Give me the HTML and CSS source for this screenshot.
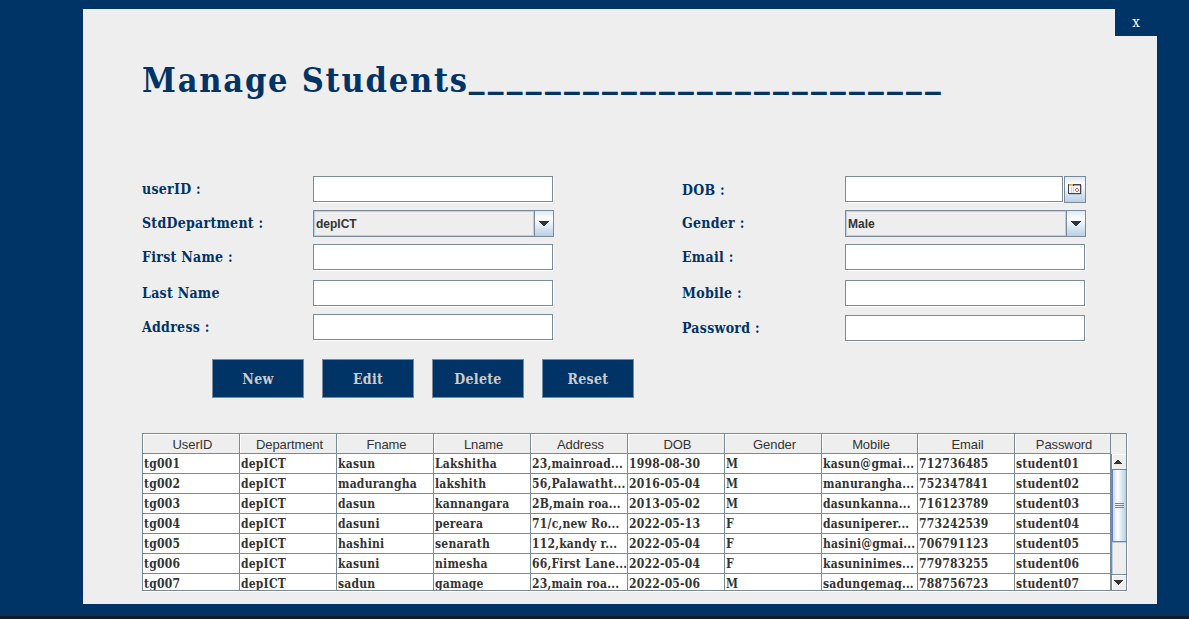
FILE: index.html
```html
<!DOCTYPE html>
<html lang="en">
<head>
<meta charset="utf-8">
<title>Manage Students</title>
<link rel="stylesheet" href="styles.css">
</head>
<body>
<main class="panel">
  <button class="close">x</button>
  <h1 class="title">Manage Students<span class="rule">_________________________</span></h1>
  <form class="form">
    <div class="col col-left">
      <label>userID :</label><input class="field">
      <label>StdDepartment :</label>
      <div class="combo"><span class="value">depICT</span><span class="drop"><svg width="10" height="5" viewBox="0 0 10 5"><path d="M0 0h10v1H9v1H8v1H7v1H6v1H4V4H3V3H2V2H1V1H0z"/></svg></span></div>
      <label>First Name :</label><input class="field">
      <label>Last Name</label><input class="field">
      <label>Address :</label><input class="field">
    </div>
    <div class="col col-right">
      <label class="low">DOB :</label>
      <div class="date"><input class="field"><button type="button" class="cal"><svg width="14" height="11" viewBox="0 0 14 11" shape-rendering="crispEdges"><path fill="#b9c2cc" d="M1 1h13v10H1z"/><path fill="#444" d="M0 0h13v10H0z"/><path fill="#f4f4f4" d="M1 2h11v7H1z"/><path fill="#e8a840" d="M1 0h4v1H1z"/><path fill="#f0c060" d="M1 1h4v1H1z"/><path fill="#8aaee6" d="M6 1h6v1H6z"/><path fill="#d5d5d5" d="M3 3h1v6H3zM5 3h1v6H5z"/><path fill="#e86070" d="M8 4h2v1H8zM7 5h1v2H7zM10 5h1v2h-1zM8 7h2v1H8z"/></svg></button></div>
      <label>Gender :</label>
      <div class="combo"><span class="value">Male</span><span class="drop"><svg width="10" height="5" viewBox="0 0 10 5"><path d="M0 0h10v1H9v1H8v1H7v1H6v1H4V4H3V3H2V2H1V1H0z"/></svg></span></div>
      <label>Email :</label><input class="field">
      <label>Mobile :</label><input class="field">
      <label>Password :</label><input class="field">
    </div>
  </form>
  <div class="actions"><button>New</button><button>Edit</button><button>Delete</button><button>Reset</button></div>
  <section class="grid">
    <div class="row head"><span>UserID</span><span>Department</span><span>Fname</span><span>Lname</span><span>Address</span><span>DOB</span><span>Gender</span><span>Mobile</span><span>Email</span><span>Password</span></div>
    <div class="body">
      <div class="rows">
        <div class="row"><span>tg001</span><span>depICT</span><span>kasun</span><span>Lakshitha</span><span>23,mainroad...</span><span>1998-08-30</span><span>M</span><span>kasun@gmai...</span><span>712736485</span><span>student01</span></div>
        <div class="row"><span>tg002</span><span>depICT</span><span>madurangha</span><span>lakshith</span><span>56,Palawatht...</span><span>2016-05-04</span><span>M</span><span>manurangha...</span><span>752347841</span><span>student02</span></div>
        <div class="row"><span>tg003</span><span>depICT</span><span>dasun</span><span>kannangara</span><span>2B,main roa...</span><span>2013-05-02</span><span>M</span><span>dasunkanna...</span><span>716123789</span><span>student03</span></div>
        <div class="row"><span>tg004</span><span>depICT</span><span>dasuni</span><span>pereara</span><span>71/c,new Ro...</span><span>2022-05-13</span><span>F</span><span>dasuniperer...</span><span>773242539</span><span>student04</span></div>
        <div class="row"><span>tg005</span><span>depICT</span><span>hashini</span><span>senarath</span><span>112,kandy r...</span><span>2022-05-04</span><span>F</span><span>hasini@gmai...</span><span>706791123</span><span>student05</span></div>
        <div class="row"><span>tg006</span><span>depICT</span><span>kasuni</span><span>nimesha</span><span>66,First Lane...</span><span>2022-05-04</span><span>F</span><span>kasuninimes...</span><span>779783255</span><span>student06</span></div>
        <div class="row"><span>tg007</span><span>depICT</span><span>sadun</span><span>gamage</span><span>23,main roa...</span><span>2022-05-06</span><span>M</span><span>sadungemag...</span><span>788756723</span><span>student07</span></div>
      </div>
      <div class="scroll">
        <div class="arrow"><svg width="8" height="4" viewBox="0 0 8 4"><path d="M3 0h2v1h1v1h1v1h1v1H0V3h1V2h1V1h1z"/></svg></div>
        <div class="thumb"><i></i><i></i><i></i></div>
        <div class="track"></div>
        <div class="arrow down"><svg width="9" height="5" viewBox="0 0 9 5"><path d="M0 0h9v1H8v1H7v1H6v1H5v1H4V4H3V3H2V2H1V1H0z"/></svg></div>
      </div>
    </div>
  </section>
</main>
<footer class="taskbar"></footer>
</body>
</html>
```

FILE: styles.css
```css
* { box-sizing: border-box; }
body {
  margin: 0; height: 619px; overflow: hidden; background: #003366;
  display: flex; flex-direction: column; padding: 9px 32px 0 83px;
  font-family: "DejaVu Serif Condensed", "DejaVu Serif", serif; font-stretch: condensed;
}
button, input { font: inherit; margin: 0; padding: 0; border-radius: 0; outline: 0; }
.panel { width: 1074px; height: 595px; flex: none; background: #eee; display: flex; flex-direction: column; padding-left: 59px; }
.close { align-self: flex-end; width: 42px; height: 27px; border: 0; background: #003366; color: #fff; font-size: 15px; padding-bottom: 2px; }
.title { margin: 20px 0 0; height: 48px; line-height: 48px; font-size: 34px; font-weight: bold; color: #003366; white-space: nowrap; letter-spacing: 1.78px; }
.rule { letter-spacing: 3.27px; font-size: 35px; vertical-align: 5px; line-height: 1; }
.form { display: flex; margin-top: 72px; height: 183px; color: #003366; font-size: 14px; font-weight: bold; }
.col { display: grid; align-content: start; }
.col-left { grid-template: 34px 34px 36px 34px 26px / 171px 241px; margin-right: 128px; }
.col-right { grid-template: 34px 34px 36px 35px 26px / 163px 241px; }
.col label { line-height: 26px; white-space: nowrap; letter-spacing: 0.27px; }
.col .low { line-height: 28px; }
.field { width: 240px; height: 26px; background: #fff; border: 1px solid #7a8a99; box-shadow: 1px 1px #fff; }
.combo { display: flex; width: 241px; height: 27px; border: 1px solid #7a8a99; color: #333; font: bold 12px "Liberation Sans", sans-serif; }
.value { flex: 1; line-height: 24px; padding-left: 1px; border: 1px solid #b8cfe5; background: #eee; }
.drop { width: 19px; border-left: 1px solid #7a8a99; background: linear-gradient(#dde8f3, #fff 30%, #b8cfe5); display: flex; align-items: center; justify-content: center; }
svg { display: block; fill: #333; }
.date { display: flex; gap: 1px; }
.date .field { width: 218px; }
.cal { width: 22px; height: 27px; border: 1px solid #7a8a99; background: linear-gradient(#dde8f3, #fff 30%, #b8cfe5); display: flex; align-items: center; justify-content: center; }
.actions { display: flex; gap: 18px; padding-left: 70px; }
.actions button { width: 92px; height: 39px; border: 1px solid #7a8a99; background: #003366; color: #ccc; font-size: 14px; font-weight: bold; letter-spacing: 0.3px; }
.grid { width: 985px; height: 158px; margin-top: 35px; border: 1px solid #7a8a99; box-shadow: 1px 1px #fff; display: flex; flex-direction: column; overflow: hidden; color: #333; }
.row { display: grid; grid-template-columns: repeat(7, 97px) 96px 97px 96px; width: 968px; height: 20px; font-size: 12px; font-weight: bold; letter-spacing: 0.22px; line-height: 20px; }
.row span { padding-left: 1px; border-right: 1px solid #7a8a99; border-bottom: 1px solid #7a8a99; background: #fff; white-space: nowrap; overflow: hidden; }
.head { font: 13px/20px "Liberation Sans", sans-serif; letter-spacing: -0.1px; flex: none; }
.head span { text-align: center; background: #eee; padding: 1px 0 0 3px; line-height: 19px; box-shadow: inset 1px 1px #fff; }
.body { flex: 1; display: flex; min-height: 0; }
.rows { width: 968px; overflow: hidden; }
.scroll { flex: 1; display: flex; flex-direction: column; border-left: 1px solid #7a8a99; }
.arrow { height: 15px; display: flex; align-items: center; justify-content: center; padding-right: 2px; box-shadow: inset 1px 1px #fff; }
.thumb { height: 73px; border: 1px solid #6382bf; border-right: 0; background: linear-gradient(90deg, #c8d9ea, #fff 35%, #b8cfe5); display: flex; flex-direction: column; align-items: center; justify-content: center; gap: 1px; }
.thumb i { width: 9px; height: 1px; background: #6382bf; }
.track { flex: 1; border: solid #b8cfe5; border-width: 1px 0 0 1px; }
.down { height: 16px; border-top: 1px solid #7a8a99; }
.taskbar { height: 3px; margin: 12px -32px 0 -83px; background: #141c2c; flex: none; }
```
